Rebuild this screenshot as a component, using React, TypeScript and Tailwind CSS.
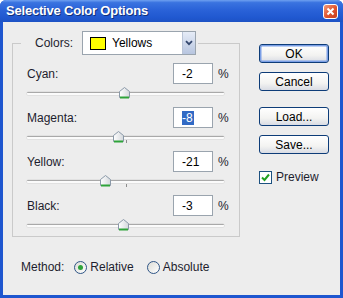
import React from "react";

const font = { fontFamily: '"Liberation Sans", Arial, sans-serif' };

function Thumb({ left }: { left: number }) {
  return (
    <svg
      width="11"
      height="12"
      viewBox="0 0 11 12"
      className="absolute top-[3px]"
      style={{ left: left - 5 }}
    >
      <defs>
        <linearGradient id="thumbFill" x1="0" y1="0" x2="1" y2="0">
          <stop offset="0" stopColor="#ffffff" />
          <stop offset="1" stopColor="#d4d8dc" />
        </linearGradient>
      </defs>
      <path
        d="M0.5 4.5 L5.5 0.5 L10.5 4.5 L10.5 10.5 L0.5 10.5 Z"
        fill="url(#thumbFill)"
        stroke="#8b99a8"
      />
      <path d="M1 10.5 H10" stroke="#2ea33a" strokeWidth="2" />
    </svg>
  );
}

function Slider({ thumb, tick }: { thumb: number; tick?: boolean }) {
  return (
    <div className="relative h-[16px] w-[197px]">
      <div className="absolute left-0 top-[8px] h-[3px] w-[197px] rounded-[1px] border-t border-[#a9a9a9] bg-[#fbfbfb] shadow-[0_0_0_0.5px_#d6d6d6]" />
      {tick && <div className="absolute left-[99px] top-[12px] h-[3px] w-px bg-[#8c8c8c]" />}
      <Thumb left={thumb} />
    </div>
  );
}

function Row({
  label,
  value,
  selected,
  thumb,
  tick,
  last,
}: {
  label: string;
  value: string;
  selected?: boolean;
  thumb: number;
  tick?: boolean;
  last?: boolean;
}) {
  return (
    <div className={last ? "" : "mb-[7px]"}>
      <div className="flex h-[21px] items-center">
        <span className="flex-1 text-[12px] text-[#1d1d2e]">{label}</span>
        <div className="flex h-[21px] w-[40px] items-center border border-[#9aa4ae] bg-white pl-[8px] text-[12px] text-black">
          {selected ? (
            <span className="bg-[#316ac5] pr-[1px] leading-[14px] text-white">{value}</span>
          ) : (
            <span>{value}</span>
          )}
        </div>
        <span className="ml-[5px] w-[13px] text-[12px] text-[#1d1d2e]">%</span>
      </div>
      <Slider thumb={thumb} tick={tick} />
    </div>
  );
}

function Button({ children, main }: { children: React.ReactNode; main?: boolean }) {
  return (
    <div
      className={
        "flex h-[19px] w-[70px] items-center justify-center rounded-[3px] border border-[#0d3c78] bg-[linear-gradient(#ffffff,#f3f3f1_60%,#d9dce4)] text-[12px] text-black " +
        (main ? "shadow-[inset_0_0_0_1.5px_#7b9fe6]" : "")
      }
    >
      {children}
    </div>
  );
}

function Radio({ checked }: { checked?: boolean }) {
  return (
    <div className="flex h-[13px] w-[13px] items-center justify-center rounded-full border border-[#2f5586] bg-[linear-gradient(135deg,#dcdcd6,#ffffff)]">
      {checked && <div className="h-[5px] w-[5px] rounded-full bg-[#2ea33a]" />}
    </div>
  );
}

export default function App() {
  return (
    <div
      className="flex h-[298px] w-[343px] flex-col overflow-hidden rounded-t-[6px] bg-[#1e56cf]"
      style={font}
    >
      <div className="flex h-[22px] shrink-0 items-center bg-[linear-gradient(#6ea0f0,#3a73e0_12%,#2a62d8_45%,#2058d0_80%,#1d52c4)] pl-[6px] pr-[5px]">
        <span className="flex-1 text-[13px] font-bold tracking-[-0.2px] text-white [text-shadow:1px_1px_0_#10307a]">
          Selective Color Options
        </span>
        <div className="flex h-[15px] w-[15px] items-center justify-center rounded-[3px] border border-white bg-[linear-gradient(135deg,#f29a7a,#e0532e_55%,#c8401f)]">
          <svg width="9" height="9" viewBox="0 0 9 9">
            <path d="M1.5 1.5 L7.5 7.5 M7.5 1.5 L1.5 7.5" stroke="#fff" strokeWidth="2" />
          </svg>
        </div>
      </div>
      <div className="mx-[3px] mb-[3px] flex flex-1 bg-[#ededed] pl-[9px] pt-[9px]">
        <div className="flex w-[228px] flex-col">
          <fieldset className="m-0 border border-[#cacaca] px-[8px] pb-[4px] pt-0">
            <legend className="flex items-center pl-[14px] pr-[2px]">
              <span className="text-[12px] text-[#1d1d2e]">Colors:</span>
              <div className="ml-[9px] flex h-[24px] w-[114px] items-stretch border border-[#9aa4ae] bg-white">
                <div className="flex flex-1 items-center pl-[7px]">
                  <div className="h-[13px] w-[16px] border border-black bg-[#ffff00]" />
                  <span className="ml-[6px] text-[12px] text-black">Yellows</span>
                </div>
                <div className="flex w-[13px] items-center justify-center border-l border-[#b9c4d6] bg-[linear-gradient(#e6ecf7,#b7c5df)]">
                  <svg width="8" height="6" viewBox="0 0 8 6">
                    <path d="M1 1.2 L4 4.2 L7 1.2" fill="none" stroke="#34476e" strokeWidth="1.8" />
                  </svg>
                </div>
              </div>
            </legend>
            <div className="pl-[6px] pt-[8px]">
              <Row label="Cyan:" value="-2" thumb={97} />
              <Row label="Magenta:" value="-8" selected thumb={91} tick />
              <Row label="Yellow:" value="-21" thumb={78} tick />
              <Row label="Black:" value="-3" thumb={96} last />
            </div>
          </fieldset>
          <div className="ml-[9px] mt-[22px] flex h-[16px] items-center text-[12px] text-[#1d1d2e]">
            <span>Method:</span>
            <div className="ml-[10px]">
              <Radio checked />
            </div>
            <span className="ml-[3px]">Relative</span>
            <div className="ml-[13px]">
              <Radio />
            </div>
            <span className="ml-[3px]">Absolute</span>
          </div>
        </div>
        <div className="ml-[19px] flex flex-col pt-[13px]">
          <Button main>OK</Button>
          <div className="mt-[9px]">
            <Button>Cancel</Button>
          </div>
          <div className="mt-[16px]">
            <Button>Load...</Button>
          </div>
          <div className="mt-[9px]">
            <Button>Save...</Button>
          </div>
          <div className="mt-[14px] flex items-center">
            <div className="flex h-[13px] w-[13px] items-center justify-center border border-[#1c5180] bg-white">
              <svg width="9" height="9" viewBox="0 0 9 9">
                <path d="M1 4.5 L3.5 7 L8 1.5" fill="none" stroke="#21a121" strokeWidth="2" />
              </svg>
            </div>
            <span className="ml-[4px] text-[12px] text-[#1d1d2e]">Preview</span>
          </div>
        </div>
      </div>
    </div>
  );
}
